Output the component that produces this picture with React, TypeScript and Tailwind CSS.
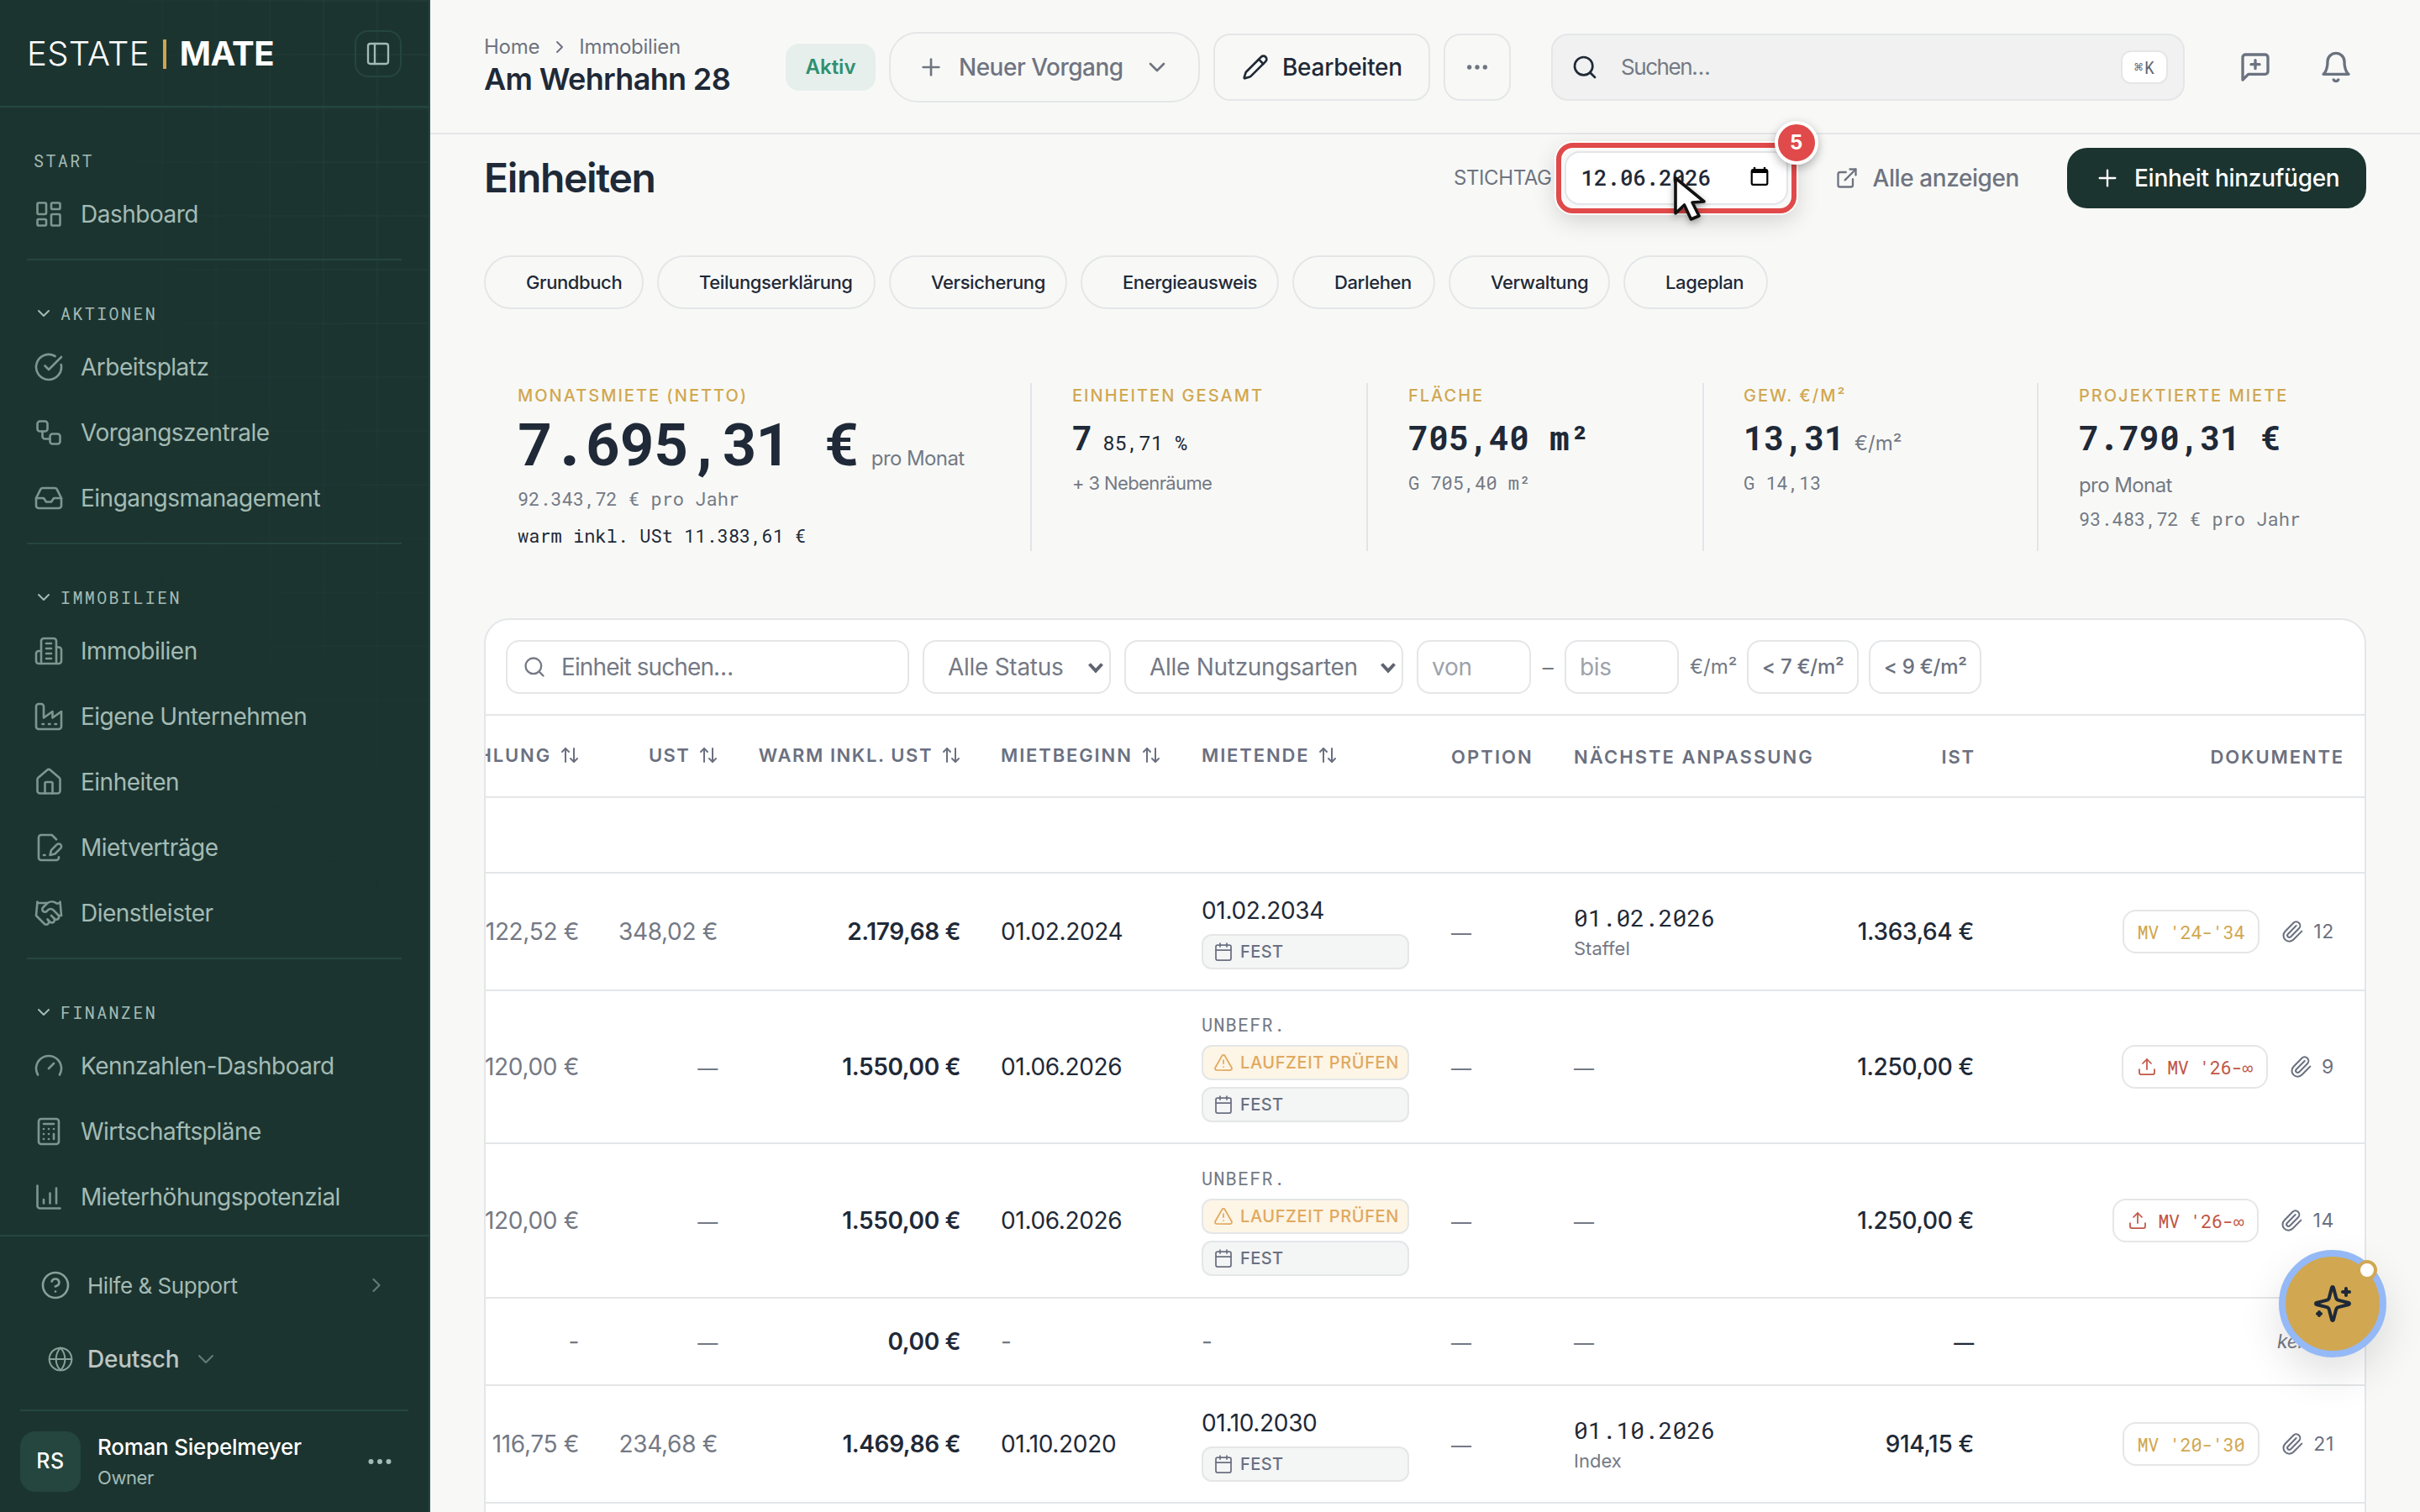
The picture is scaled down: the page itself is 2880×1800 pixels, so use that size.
import type { ComponentType, ReactNode } from "react";
import {
  ArrowUpDown,
  Calculator,
  Calendar,
  ChartColumnIncreasing,
  ChevronDown,
  ChevronRight,
  CircleCheckBig,
  CircleHelp,
  Ellipsis,
  ExternalLink,
  Gauge,
  Globe,
  Handshake,
  House,
  Inbox,
  LayoutDashboard,
  PanelLeft,
  Paperclip,
  Pencil,
  Plus,
  Search,
  TriangleAlert,
  Upload,
  Workflow,
} from "lucide-react";

const MONO = "font-['Roboto_Mono','DejaVu_Sans_Mono',monospace]";

type IconProps = { size?: number; strokeWidth?: number; className?: string };

function Glyph({ size = 24, strokeWidth = 2, className, children }: IconProps & { children: ReactNode }) {
  return (
    <svg
      width={size}
      height={size}
      viewBox="0 0 24 24"
      fill="none"
      stroke="currentColor"
      strokeWidth={strokeWidth}
      strokeLinecap="round"
      strokeLinejoin="round"
      className={className}
    >
      {children}
    </svg>
  );
}

const BuildingIcon = (p: IconProps) => (
  <Glyph {...p}>
    <path d="M6 22V4a2 2 0 0 1 2-2h8a2 2 0 0 1 2 2v18Z" />
    <path d="M6 12H4a2 2 0 0 0-2 2v6a2 2 0 0 0 2 2h2" />
    <path d="M18 9h2a2 2 0 0 1 2 2v9a2 2 0 0 1-2 2h-2" />
    <path d="M10 6h4M10 10h4M10 14h4M10 18h4" />
  </Glyph>
);

const FactoryIcon = (p: IconProps) => (
  <Glyph {...p}>
    <path d="M2 20a2 2 0 0 0 2 2h16a2 2 0 0 0 2-2V8l-7 5V8l-7 5V4a2 2 0 0 0-2-2H4a2 2 0 0 0-2 2Z" />
    <path d="M17 18h1M12 18h1M7 18h1" />
  </Glyph>
);

const SignatureIcon = (p: IconProps) => (
  <Glyph {...p}>
    <path d="M20 19.5v.5a2 2 0 0 1-2 2H6a2 2 0 0 1-2-2V4a2 2 0 0 1 2-2h8.5L18 5.5" />
    <path d="M8 18h1" />
    <path d="M18.42 9.61a2.1 2.1 0 1 1 2.97 2.97L16.95 17 13 18l.99-3.95 4.43-4.44Z" />
  </Glyph>
);

const FeedbackIcon = (p: IconProps) => (
  <Glyph {...p}>
    <path d="M21 15a2 2 0 0 1-2 2H7l-4 4V5a2 2 0 0 1 2-2h14a2 2 0 0 1 2 2z" />
    <path d="M12 7v6M9 10h6" />
  </Glyph>
);

const BellIcon = (p: IconProps) => (
  <Glyph {...p}>
    <path d="M6 8a6 6 0 0 1 12 0c0 7 3 9 3 9H3s3-2 3-9" />
    <path d="M10.3 21a1.94 1.94 0 0 0 3.4 0" />
  </Glyph>
);

const SparklesIcon = (p: IconProps) => (
  <Glyph {...p}>
    <path d="M9.937 15.5A2 2 0 0 0 8.5 14.063l-6.135-1.582a.5.5 0 0 1 0-.962L8.5 9.936A2 2 0 0 0 9.937 8.5l1.582-6.135a.5.5 0 0 1 .963 0L14.063 8.5A2 2 0 0 0 15.5 9.937l6.135 1.581a.5.5 0 0 1 0 .964L15.5 14.063a2 2 0 0 0-1.437 1.437l-1.582 6.135a.5.5 0 0 1-.963 0z" />
    <path d="M20 3v4M22 5h-4M4 17v2M5 18H3" />
  </Glyph>
);

type NavItem = { label: string; icon: ComponentType<IconProps> };

const sections: { title: string; collapsible: boolean; items: NavItem[] }[] = [
  { title: "START", collapsible: false, items: [{ label: "Dashboard", icon: LayoutDashboard }] },
  {
    title: "AKTIONEN",
    collapsible: true,
    items: [
      { label: "Arbeitsplatz", icon: CircleCheckBig },
      { label: "Vorgangszentrale", icon: Workflow },
      { label: "Eingangsmanagement", icon: Inbox },
    ],
  },
  {
    title: "IMMOBILIEN",
    collapsible: true,
    items: [
      { label: "Immobilien", icon: BuildingIcon },
      { label: "Eigene Unternehmen", icon: FactoryIcon },
      { label: "Einheiten", icon: House },
      { label: "Mietverträge", icon: SignatureIcon },
      { label: "Dienstleister", icon: Handshake },
    ],
  },
  {
    title: "FINANZEN",
    collapsible: true,
    items: [
      { label: "Kennzahlen-Dashboard", icon: Gauge },
      { label: "Wirtschaftspläne", icon: Calculator },
      { label: "Mieterhöhungspotenzial", icon: ChartColumnIncreasing },
    ],
  },
];

function Sidebar() {
  return (
    <aside className="relative flex h-full w-[512px] shrink-0 flex-col border-r-2 border-[#24463f] bg-[#1c3430] text-[#a3bbb4]">
      {/* Faint grid, fades out towards the bottom left */}
      <div className="pointer-events-none absolute inset-0 bg-[linear-gradient(to_right,rgba(120,190,170,0.05)_2px,transparent_2px),linear-gradient(to_bottom,rgba(120,190,170,0.05)_2px,transparent_2px)] bg-[size:64px_64px] [mask-image:radial-gradient(ellipse_85%_62%_at_100%_0%,black,transparent)]" />

      <div className="relative flex h-32 items-center justify-between border-b-2 border-[#24463f] pt-0.5 pr-8 pl-8 text-white">
        <div className="flex items-center text-[40px] leading-none">
          <span className="font-light tracking-[0.008em]">ESTATE</span>
          <span className="mr-4 ml-4 h-[35px] w-1 bg-[#cfa452]" />
          <span className="font-bold tracking-[-0.016em]">MATE</span>
        </div>
        <button className="flex size-14 items-center justify-center rounded-2xl border-2 border-[#24463f] text-[#a3bbb4]">
          <PanelLeft size={32} strokeWidth={1.75} />
        </button>
      </div>

      <nav className="relative h-[1342px] overflow-hidden">
        {sections.map((section, i) => (
          <div key={section.title}>
            {i > 0 && <div className="mx-8 mt-3.5 h-0.5 w-[446px] bg-[#24463f]" />}
            <div className="mt-[38px] flex h-[50px] items-center pl-10">
              {section.collapsible && <ChevronDown size={24} strokeWidth={2} className="mr-2" />}
              <span className={`${MONO} text-[20px] tracking-[0.12em]`}>{section.title}</span>
            </div>
            {section.items.map(({ label, icon: Icon }) => (
              <a key={label} className="flex h-[78px] items-center gap-5 pl-10 text-[28px] tracking-[-0.018em]">
                <Icon size={36} strokeWidth={1.75} className="text-[#7c978f]" />
                <span className="pb-px">{label}</span>
              </a>
            ))}
          </div>
        ))}
      </nav>

      <div className="relative flex flex-1 flex-col border-t-2 border-[#24463f]">
        <div className="mt-[22px] flex h-[72px] items-center pl-12">
          <CircleHelp size={36} strokeWidth={1.75} className="text-[#87a199]" />
          <span className="ml-5 pt-px text-[26px] tracking-[-0.018em]">Hilfe &amp; Support</span>
          <ChevronRight size={28} strokeWidth={1.75} className="mr-12 ml-auto text-[#5f7f76]" />
        </div>
        <div className="mt-4 flex h-[72px] items-center pl-14">
          <Globe size={32} strokeWidth={1.5} className="text-[#87a199]" />
          <span className="ml-4 text-[28px] font-medium tracking-[-0.008em] text-[#bcc6c3]">Deutsch</span>
          <ChevronDown size={32} strokeWidth={1.5} className="ml-4 text-[#5f7f76]" />
        </div>
        <div className="mx-6 mt-6 flex h-[122px] items-center border-t-2 border-[#24463f]">
          <div className="flex size-[72px] items-center justify-center rounded-[18px] bg-[#24463f] text-[25px] font-medium tracking-wide text-white">
            RS
          </div>
          <div className="ml-5 flex flex-col pt-0.5">
            <span className="text-[26px] leading-9 font-medium tracking-[-0.009em] text-white">Roman Siepelmeyer</span>
            <span className="text-[22px] leading-[36px] tracking-[-0.02em]">Owner</span>
          </div>
          <Ellipsis size={36} strokeWidth={2} className="mr-4 ml-auto" />
        </div>
      </div>
    </aside>
  );
}

function TopBar() {
  return (
    <header className="flex h-40 shrink-0 items-center border-b-2 border-[#e4e6e8] pt-px pl-16 tracking-[-0.016em]">
      <div className="flex w-[359px] flex-col pb-1">
        <div className="flex items-center gap-[11.5px] text-[24px] leading-8 text-[#6f7480]">
          <span>Home</span>
          <ChevronRight size={24} />
          <span>Immobilien</span>
        </div>
        <h1 className="text-[36px] leading-[44px] font-semibold tracking-[-0.018em] text-[#1f2937]">Am Wehrhahn 28</h1>
      </div>
      <span className="flex h-14 w-[107px] items-center justify-center rounded-2xl bg-[#e6efec] text-[24px] font-semibold tracking-normal text-[#2f9070]">
        Aktiv
      </span>
      <button className="ml-4 flex h-[84px] w-[370px] items-center rounded-[34px] border-2 border-[#e4e6e8] pl-8 text-[28px] font-medium tracking-[-0.018em] text-[#6f7480]">
        <Plus size={32} />
        <span className="ml-[17px]">Neuer Vorgang</span>
        <ChevronDown size={32} className="ml-6" />
      </button>
      <button className="ml-4 flex h-20 w-[258px] items-center rounded-[20px] border-2 border-[#e4e6e8] pl-8 text-[28px] font-medium tracking-[-0.01em] text-[#1f2937]">
        <Pencil size={32} />
        <span className="ml-4">Bearbeiten</span>
      </button>
      <button className="ml-4 flex size-20 items-center justify-center rounded-[20px] border-2 border-[#e4e6e8] text-[#6f7480]">
        <Ellipsis size={32} />
      </button>
      <div className="ml-12 flex h-20 w-[754px] items-center rounded-[20px] border-2 border-[#e4e6e8] bg-[#f0f1f0] pr-[18px] pl-[22px]">
        <Search size={32} className="text-[#1f2937]" />
        <span className="ml-[27px] text-[26px] tracking-[-0.055em] text-[#747985]">Suchen…</span>
        <kbd
          className={`${MONO} ml-auto flex h-10 w-[56px] items-center justify-center gap-0.5 rounded-xl border-2 border-[#e4e6e8] bg-white text-[20px] tracking-normal text-[#5f6470]`}
        >
          <span className="text-[17px]">⌘</span>K
        </kbd>
      </div>
      <FeedbackIcon size={40} className="ml-16 text-[#6b7280]" />
      <BellIcon size={40} className="ml-14 text-[#6b7280]" />
    </header>
  );
}

function DateField() {
  return (
    <div className="relative ml-[15px] flex h-16 w-[266px] items-center justify-between rounded-[18px] border-2 border-[#e2e5e9] bg-white pr-[21px] pl-[18px]">
      <span className={`${MONO} pb-px text-[26px] tracking-[-0.005em] text-[#1f2937]`}>12.06.2026</span>
      <svg width="22" height="24" viewBox="0 0 22 24" className="mb-1 text-black">
        <path d="M5 1v4M17 1v4" stroke="currentColor" strokeWidth="2.4" />
        <rect x="1.7" y="4.2" width="18.6" height="17.6" rx="1.8" fill="none" stroke="currentColor" strokeWidth="2.2" />
        <path d="M1.5 4h19v4h-19z" fill="currentColor" />
      </svg>

      {/* Step highlight */}
      <div className="absolute -top-3 -right-3 -bottom-3 -left-3 rounded-[20px] border-[6px] border-[#e04a4a] shadow-[0_0_0_2px_white,0_8px_28px_rgba(0,0,0,0.16),inset_0_0_0_2px_rgba(255,255,255,0.7)]" />
      <div className="absolute -top-[38px] -right-[38px] flex size-[52px] items-center justify-center rounded-full border-4 border-white bg-[#e04a4a] text-[24px] font-bold text-white shadow-[0_4px_12px_rgba(0,0,0,0.3)]">
        5
      </div>
      <svg
        width="46"
        height="60"
        viewBox="-4 -4 46 60"
        className="absolute top-[26px] left-[126px] drop-shadow-[0_3px_4px_rgba(0,0,0,0.35)]"
      >
        <path
          d="M0 0 0 42 10.5 32 18.5 49 28 45 20 29 34 28Z"
          fill="white"
          stroke="#111"
          strokeWidth="3.6"
          strokeLinejoin="round"
        />
      </svg>
    </div>
  );
}

const chips = [
  { label: "Grundbuch", width: "w-[190px]" },
  { label: "Teilungserklärung", width: "w-[260px]" },
  { label: "Versicherung", width: "w-[212px]" },
  { label: "Energieausweis", width: "w-[236px]" },
  { label: "Darlehen", width: "w-[170px]" },
  { label: "Verwaltung", width: "w-[192px]" },
  { label: "Lageplan", width: "w-[172px]" },
];

function Stat({ label, className, children }: { label: string; className: string; children: ReactNode }) {
  return (
    <div className={`flex flex-col ${className}`}>
      <span className="mt-[3px] text-[20px] leading-6 font-medium tracking-[0.1em] text-[#d1a751]">{label}</span>
      {children}
    </div>
  );
}

function Stats() {
  const value = `${MONO} text-[40px] leading-[56px] font-bold text-[#1f2937]`;
  const sub = `${MONO} text-[22px] leading-8`;
  return (
    <section className="mt-[88px] flex h-[200px] shrink-0 text-[#747985]">
      <Stat label="MONATSMIETE (NETTO)" className="w-[652px] border-r-2 border-[#e2e5e8] pl-10">
        <div className="mt-1.5 flex h-[76px] items-baseline gap-4">
          <span className={`${MONO} text-[71px] leading-[76px] font-bold tracking-[-0.03em] text-[#1f2937]`}>7.695,31 €</span>
          <span className="text-[24px] tracking-[-0.024em]">pro Monat</span>
        </div>
        <span className={`${sub} mt-[13px]`}>92.343,72 € pro Jahr</span>
        <span className={`${sub} mt-3 text-[#1f2937]`}>warm inkl. USt 11.383,61 €</span>
      </Stat>
      <Stat label="EINHEITEN GESAMT" className="w-[400px] border-r-2 border-[#e2e5e8] pl-12">
        <div className="mt-2.5 flex items-baseline gap-3">
          <span className={value}>7</span>
          <span className={`${MONO} text-[24px] text-[#1f2937]`}>85,71 %</span>
        </div>
        <span className="mt-2.5 text-[22px] leading-8 tracking-[-0.028em]">+ 3 Nebenräume</span>
      </Stat>
      <Stat label="FLÄCHE" className="w-[400px] border-r-2 border-[#e2e5e8] pl-12">
        <span className={`${value} mt-2.5`}>705,40 m²</span>
        <span className={`${sub} mt-2.5`}>G 705,40 m²</span>
      </Stat>
      <Stat label="GEW. €/M²" className="w-[398px] border-r-2 border-[#e2e5e8] pl-[47px]">
        <div className="mt-2.5 flex items-baseline gap-3">
          <span className={value}>13,31</span>
          <span className="text-[24px]">€/m²</span>
        </div>
        <span className={`${sub} mt-2.5`}>G 14,13</span>
      </Stat>
      <Stat label="PROJEKTIERTE MIETE" className="pl-12">
        <span className={`${value} mt-2.5`}>7.790,31 €</span>
        <span className="mt-[11px] text-[24px] leading-9 tracking-[-0.024em]">pro Monat</span>
        <span className={`${sub} mt-1.5`}>93.483,72 € pro Jahr</span>
      </Stat>
    </section>
  );
}

const Caret = () => (
  <svg width="20" height="14" viewBox="0 0 20 14" className="mt-0.5 text-[#5f6470]">
    <path d="M2.5 2.5 10 10.5 17.5 2.5" fill="none" stroke="currentColor" strokeWidth="4" />
  </svg>
);

function Toolbar() {
  const box = "flex h-16 items-center rounded-2xl border-2 border-[#e4e6e8] bg-white";
  return (
    <div className="flex h-[114px] shrink-0 items-center border-b-2 border-[#e4e6e8] pl-6 text-[28px] tracking-[-0.01em] text-[#747985]">
      <div className={`${box} w-[480px] pl-[18px]`}>
        <Search size={28} />
        <span className="ml-[18px] tracking-[-0.032em]">Einheit suchen…</span>
      </div>
      <div className={`${box} ml-4 w-[224px] justify-between pr-1.5 pl-7`}>
        Alle Status
        <Caret />
      </div>
      <div className={`${box} ml-4 w-[332px] justify-between pr-1.5 pl-7`}>
        Alle Nutzungsarten
        <Caret />
      </div>
      <div className={`${box} ml-4 w-[136px] pl-4 text-[#9ea2ab]`}>von</div>
      <span className="w-10 text-center text-[26px]">–</span>
      <div className={`${box} w-[136px] pl-4 text-[#9ea2ab]`}>bis</div>
      <span className="ml-[13px] text-[24px] tracking-normal">€/m²</span>
      <button className={`${box} ml-3 w-[133px] justify-center text-[24px] font-medium text-[#6b7080]`}>&lt; 7 €/m²</button>
      <button className={`${box} ml-3 w-[134px] justify-center text-[24px] font-medium text-[#6b7080]`}>&lt; 9 €/m²</button>
    </div>
  );
}

function Badge({ warn }: { warn?: boolean }) {
  return warn ? (
    <span className="flex h-[42px] w-[247px] items-center gap-2 rounded-xl border-2 border-[#e4e6e8] bg-[#fdf5e6] pl-3 text-[20px] font-medium tracking-[0.03em] whitespace-nowrap text-[#e0a95e]">
      <TriangleAlert size={24} strokeWidth={1.75} />
      LAUFZEIT PRÜFEN
    </span>
  ) : (
    <span className="flex h-[42px] w-[247px] items-center gap-2 rounded-xl border-2 border-[#e4e6e8] bg-[#f4f5f5] pl-3 text-[20px] font-medium tracking-[0.02em] text-[#6b7080]">
      <Calendar size={24} strokeWidth={1.75} />
      FEST
    </span>
  );
}

const Dash = () => <span className="text-[24px]">—</span>;

type Row = {
  height: string;
  nk: string;
  ust?: string;
  warm: string;
  start: string;
  end: string;
  badges: ("warn" | "fest")[];
  next?: [string, string];
  ist?: string;
  doc?: string;
  missing?: boolean;
  files?: number;
};

const tableRows: Row[] = [
  { height: "h-[140px]", nk: "122,52 €", ust: "348,02 €", warm: "2.179,68 €", start: "01.02.2024", end: "01.02.2034", badges: ["fest"], next: ["01.02.2026", "Staffel"], ist: "1.363,64 €", doc: "MV '24-'34", files: 12 },
  { height: "h-[182px]", nk: "120,00 €", warm: "1.550,00 €", start: "01.06.2026", end: "UNBEFR.", badges: ["warn", "fest"], ist: "1.250,00 €", doc: "MV '26-∞", missing: true, files: 9 },
  { height: "h-[184px]", nk: "120,00 €", warm: "1.550,00 €", start: "01.06.2026", end: "UNBEFR.", badges: ["warn", "fest"], ist: "1.250,00 €", doc: "MV '26-∞", missing: true, files: 14 },
  { height: "h-[104px]", nk: "-", warm: "0,00 €", start: "-", end: "-", badges: [] },
  { height: "h-[140px]", nk: "116,75 €", ust: "234,68 €", warm: "1.469,86 €", start: "01.10.2020", end: "01.10.2030", badges: ["fest"], next: ["01.10.2026", "Index"], ist: "914,15 €", doc: "MV '20-'30", files: 21 },
];

function Th({ label, sort, right, className = "" }: { label: string; sort?: boolean; right?: boolean; className?: string }) {
  return (
    <th className={`overflow-hidden p-0 font-semibold ${className}`}>
      <div className={`flex items-center whitespace-nowrap ${right ? "justify-end" : ""} ${sort ? "pb-0.5" : "pt-0.5"}`}>
        {label}
        {sort && <ArrowUpDown size={24} strokeWidth={2} className="ml-2.5 shrink-0" />}
      </div>
    </th>
  );
}

function UnitsTable() {
  return (
    <table className="w-[2236px] table-fixed border-collapse text-[28px] tracking-[-0.012em] text-[#747985]">
      <colgroup>
        <col className="w-[135px]" />
        <col className="w-[165px]" />
        <col className="w-[289px]" />
        <col className="w-[239px]" />
        <col className="w-[297px]" />
        <col className="w-[146px]" />
        <col className="w-[333px]" />
        <col className="w-[191px]" />
        <col className="w-[441px]" />
      </colgroup>
      <thead>
        <tr className="h-[97px] border-b-2 border-[#e4e6e8] text-left text-[22px] tracking-[0.085em] text-[#6b7080]">
          <Th label="NK-VORAUSZAHLUNG" sort right className="pr-[23px]" />
          <Th label="UST" sort right className="pr-[23px] tracking-[0.06em]" />
          <Th label="WARM INKL. UST" sort right className="pr-[23px] tracking-[0.072em]" />
          <Th label="MIETBEGINN" sort className="pl-6" />
          <Th label="MIETENDE" sort className="pl-6" />
          <Th label="OPTION" className="pl-6 tracking-[0.095em]" />
          <Th label="NÄCHSTE ANPASSUNG" className="pl-6 tracking-[0.093em]" />
          <Th label="IST" right className="pr-[22px]" />
          <Th label="DOKUMENTE" right className="pr-6" />
        </tr>
      </thead>
      <tbody>
        <tr className="h-[90px] border-b-2 border-[#e4e6e8]">
          <td colSpan={9} />
        </tr>
        {tableRows.map((row, i) => (
          <tr key={i} className={`${row.height} border-b-2 border-[#e4e6e8]`}>
            <td className="overflow-hidden p-0 pr-6">
              <div className="flex justify-end whitespace-nowrap">{row.nk}</div>
            </td>
            <td className="pr-6 text-right">{row.ust ?? <Dash />}</td>
            <td className="pr-6 text-right font-semibold tracking-[-0.014em] text-[#1f2937]">{row.warm}</td>
            <td className={row.start === "-" ? "pl-6" : "pl-6 text-[#1f2937]"}>{row.start}</td>
            <td className="pl-6">
              <div className="flex flex-col gap-2">
                {row.end === "UNBEFR." ? (
                  <span className={`${MONO} text-[22px] leading-8 tracking-[0.05em]`}>{row.end}</span>
                ) : (
                  <span className={row.end === "-" ? "leading-10" : "leading-10 text-[#1f2937]"}>{row.end}</span>
                )}
                {row.badges.map((b) => (
                  <Badge key={b} warn={b === "warn"} />
                ))}
              </div>
            </td>
            <td className="pl-6">
              <Dash />
            </td>
            <td className="pl-6">
              {row.next ? (
                <div className="flex flex-col">
                  <span className={`${MONO} leading-10 tracking-normal text-[#1f2937]`}>{row.next[0]}</span>
                  <span className="text-[22px] leading-8 tracking-normal">{row.next[1]}</span>
                </div>
              ) : (
                <Dash />
              )}
            </td>
            <td className="pr-6 text-right font-medium text-[#1f2937]">{row.ist ?? <Dash />}</td>
            <td className="pr-9">
              {row.doc ? (
                <div className="flex items-center justify-end">
                  <span
                    className={`${MONO} flex h-[52px] items-center gap-3 rounded-2xl border-2 border-[#e4e6e8] px-4 text-[22px] tracking-[-0.02em] ${row.missing ? "text-[#c05746]" : "text-[#d1a751]"}`}
                  >
                    {row.missing && <Upload size={24} strokeWidth={1.75} />}
                    {row.doc}
                  </span>
                  <Paperclip size={28} strokeWidth={1.75} className="ml-[25px] text-[#6b7080]" />
                  <span className="ml-[11px] text-[23px] tracking-[0.03em] text-[#6b7080]">{row.files}</span>
                </div>
              ) : (
                <div className="mr-3 flex justify-end text-[23px] italic">keine</div>
              )}
            </td>
          </tr>
        ))}
      </tbody>
    </table>
  );
}

export default function App() {
  return (
    <div className="relative flex h-[1800px] w-[2880px] overflow-hidden bg-[#f8f9f7] font-['Inter',sans-serif] text-[#1f2937]">
      <Sidebar />
      <div className="flex h-full flex-1 flex-col">
        <TopBar />
        <main className="flex min-h-0 flex-1 flex-col px-16 pt-4">
          <div className="flex h-[72px] shrink-0 items-center text-[28px] font-medium tracking-[-0.015em] text-[#6f7480]">
            <h2 className="mr-auto text-[48px] leading-none font-semibold tracking-[-0.028em] text-[#1f2937]">Einheiten</h2>
            <span className="text-[24px] font-normal">STICHTAG</span>
            <DateField />
            <ExternalLink size={28} className="ml-14" />
            <span className="ml-[17px]">Alle anzeigen</span>
            <button className="ml-[57px] flex h-full w-[356px] items-center rounded-3xl bg-[#1c3430] pl-8 tracking-[-0.01em] text-white">
              <Plus size={32} strokeWidth={1.75} />
              <span className="ml-4">Einheit hinzufügen</span>
            </button>
          </div>

          <div className="mt-14 flex shrink-0 gap-4">
            {chips.map((chip) => (
              <span
                key={chip.label}
                className={`flex h-16 items-center rounded-full border-2 border-[#e4e6e8] pl-12 text-[22px] font-medium tracking-[-0.018em] ${chip.width}`}
              >
                {chip.label}
              </span>
            ))}
          </div>

          <Stats />

          <section className="mt-20 h-[1100px] shrink-0 overflow-hidden rounded-t-[30px] border-2 border-[#e4e6e8] bg-white">
            <Toolbar />
            <UnitsTable />
          </section>
        </main>
      </div>

      {/* Assistant button */}
      <button className="absolute top-[1488px] left-[2712px] flex size-32 items-center justify-center rounded-full border-8 border-[#94b9f6] bg-[#d1a751] shadow-[0_20px_50px_rgba(0,0,0,0.12)]">
        <SparklesIcon size={48} className="text-[#1f2937]" />
        <span className="absolute top-1 right-[3px] size-6 rounded-full border-4 border-[#d1a751] bg-white" />
      </button>
    </div>
  );
}
